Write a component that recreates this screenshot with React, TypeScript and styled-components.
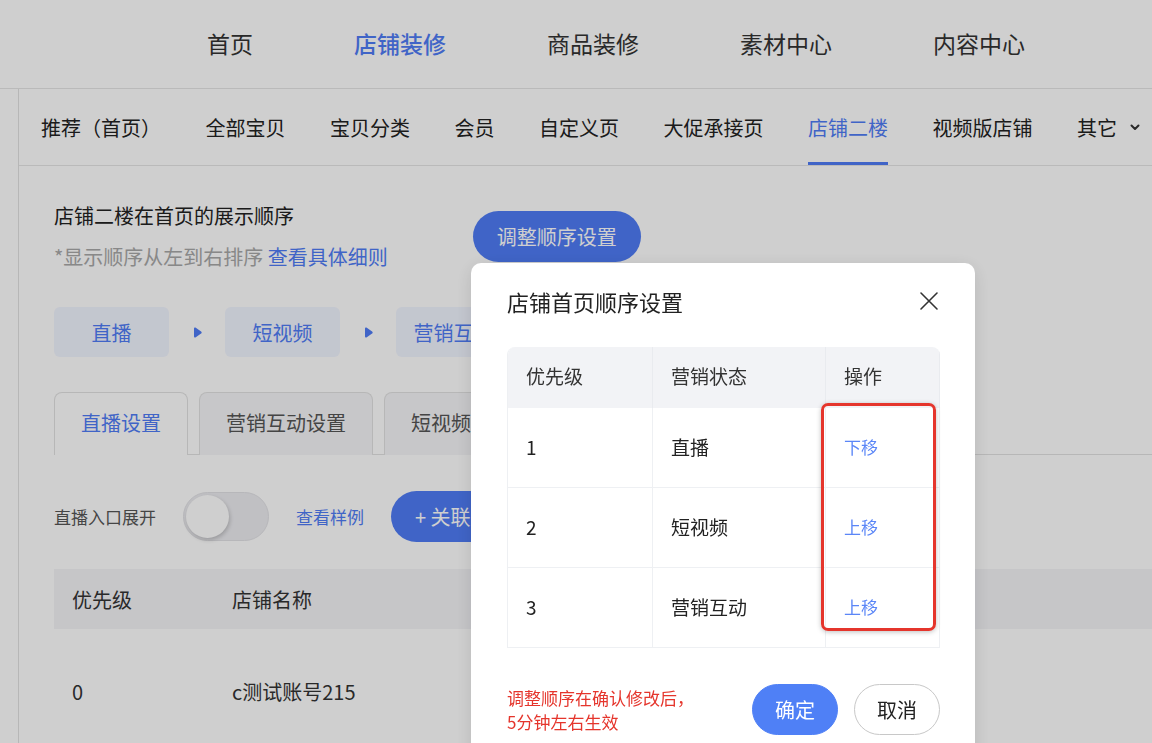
import styled, { createGlobalStyle } from "styled-components";

const blue = "#4f7cf5";

const GlobalStyle = createGlobalStyle`
    html, body { margin: 0; padding: 0; background: #fff; overflow: hidden; }
    body { font-family: "Noto Sans CJK SC", "Noto Sans", sans-serif; color: #333; }
    * { box-sizing: border-box; }
`;

/* ------------------ Page ------------------ */

const TopNav = styled.nav`
    height: 89px;
    display: flex;
    align-items: center;
    gap: 101px;
    padding: 0 0 3px 207px;
    border-bottom: 1px solid #e6e6e6;
    font-size: 23px;
`;

const TopItem = styled.span<{ $active?: boolean }>`
    color: ${(p) => (p.$active ? blue : "#333")};
    font-weight: ${(p) => (p.$active ? 500 : 400)};
`;

const Body = styled.div`
    display: flex;
    height: calc(100vh - 89px);
`;

const Sidebar = styled.aside`
    width: 19px;
    flex-shrink: 0;
    border-right: 1px solid #e2e2e2;
`;

const Main = styled.main`
    flex: 1;
    min-width: 0;
`;

const SubNav = styled.div`
    height: 77px;
    display: flex;
    gap: 44.5px;
    padding-left: 22px;
    border-bottom: 1px solid #e6e6e6;
`;

const SubItem = styled.div<{ $active?: boolean }>`
    position: relative;
    display: flex;
    align-items: center;
    gap: 12px;
    font-size: 20px;
    color: ${(p) => (p.$active ? blue : "#222")};

    &::after {
        content: "";
        display: ${(p) => (p.$active ? "block" : "none")};
        position: absolute;
        left: 0;
        right: 0;
        bottom: 0;
        height: 3px;
        background: ${blue};
    }
`;

const Content = styled.div`
    padding: 36px 0 0 35px;
`;

const SectionHead = styled.div`
    display: flex;
    align-items: center;
    gap: 85px;
`;

const TextBlock = styled.div`
    display: flex;
    flex-direction: column;
    gap: 13px;
    font-size: 20px;
    line-height: 28px;
`;

const Title = styled.div`
    color: #222;
`;

const Hint = styled.div`
    color: #a8a8a8;
`;

const Link = styled.span`
    color: ${blue};
`;

const PillButton = styled.button`
    height: 51px;
    padding: 0 24px;
    border: none;
    border-radius: 26px;
    background: ${blue};
    color: #fff;
    font-family: inherit;
    font-size: 20px;
    white-space: nowrap;
`;

const ChipRow = styled.div`
    display: flex;
    align-items: center;
    margin-top: 36px;
`;

const Chip = styled.div`
    width: 115px;
    height: 50px;
    border-radius: 6px;
    background: #f1f5ff;
    color: ${blue};
    font-size: 20px;
    display: flex;
    align-items: center;
    justify-content: center;
    flex-shrink: 0;
`;

const ChipArrow = styled.div`
    width: 56px;
    display: flex;
    justify-content: center;
`;

const TabRow = styled.div`
    display: flex;
    gap: 11px;
    margin-top: 35px;
    border-bottom: 1px solid #e2e2e2;
`;

const Tab = styled.div<{ $active?: boolean }>`
    height: 63px;
    padding: 0 26px 3px;
    display: flex;
    align-items: center;
    font-size: 20px;
    white-space: nowrap;
    border: 1px solid #e2e2e2;
    border-bottom: none;
    border-radius: 8px 8px 0 0;
    margin-bottom: -1px;
    background: ${(p) => (p.$active ? "#fff" : "#f5f5f8")};
    color: ${(p) => (p.$active ? blue : "#555")};
`;

const SwitchRow = styled.div`
    display: flex;
    align-items: center;
    gap: 27px;
    height: 51px;
    margin-top: 36px;
    font-size: 17px;
    color: #555;
`;

const SwitchTrack = styled.div`
    width: 86px;
    height: 49px;
    border-radius: 25px;
    background: #ededf1;
    border: 1px solid #e2e2e6;
    padding: 2px;
    display: flex;
    align-items: center;
`;

const SwitchKnob = styled.div`
    width: 43px;
    height: 43px;
    border-radius: 50%;
    background: #fff;
    box-shadow: 1px 2px 4px rgba(0, 0, 0, 0.2);
`;

const ListHead = styled.div`
    display: flex;
    align-items: center;
    height: 60px;
    margin-top: 27px;
    background: #f4f4f7;
    font-size: 20px;
    color: #333;
`;

const ListRow = styled.div`
    display: flex;
    align-items: center;
    height: 124px;
    font-size: 20px;
    color: #333;
`;

const ListCell = styled.div<{ $w?: number }>`
    width: ${(p) => (p.$w ? `${p.$w}px` : "auto")};
    padding-left: 18px;
`;

/* ------------------ Modal ------------------ */

const Mask = styled.div`
    position: fixed;
    inset: 0;
    background: rgba(0, 0, 0, 0.19);
`;

const Dialog = styled.div`
    position: absolute;
    left: 471px;
    top: 263px;
    width: 504px;
    height: 520px;
    background: #fff;
    border-radius: 10px;
    box-shadow: 0 4px 18px rgba(0, 0, 0, 0.12);
    padding: 24px 35px 0 36px;
`;

const DialogHead = styled.div`
    height: 28px;
    display: flex;
    align-items: center;
    justify-content: space-between;
`;

const DialogTitle = styled.div`
    font-size: 22px;
    color: #222;
`;

const CloseBtn = styled.div`
    display: flex;
    margin-right: 1px;
`;

const TableWrap = styled.div`
    position: relative;
    margin-top: 32px;
`;

const Grid = styled.div`
    display: grid;
    grid-template-columns: 145px 173px 1fr;
    grid-template-rows: 61px repeat(3, 80px);
    border-left: 1px solid #eef0f3;
    border-top-left-radius: 8px;
    border-top-right-radius: 8px;
    overflow: hidden;
`;

const HeadCell = styled.div<{ $pad: number }>`
    display: flex;
    align-items: center;
    padding: 0 0 4px ${(p) => p.$pad}px;
    background: #f2f3f6;
    border-right: 1px solid #e9ebef;
    font-size: 19px;
    color: #333;
`;

const Cell = styled.div<{ $pad: number }>`
    display: flex;
    align-items: center;
    padding: 0 0 3px ${(p) => p.$pad}px;
    border-right: 1px solid #eef0f3;
    border-bottom: 1px solid #eef0f3;
    font-size: 19px;
    color: #222;
`;

const MoveLink = styled.span`
    color: #5b86f7;
    font-size: 17px;
`;

const Highlight = styled.div`
    position: absolute;
    left: 314px;
    top: 56px;
    width: 115px;
    height: 228px;
    border: 3px solid #e5352c;
    border-radius: 7px;
    box-shadow: 0 1px 5px rgba(0, 0, 0, 0.25);
`;

const DialogFoot = styled.div`
    margin-top: 36px;
    display: flex;
    align-items: center;
    justify-content: space-between;
`;

const Note = styled.div`
    color: #e5352c;
    font-size: 17px;
    line-height: 24px;
`;

const FootButtons = styled.div`
    display: flex;
    gap: 16px;
`;

const FootButton = styled.button<{ $primary?: boolean }>`
    width: 86px;
    height: 51px;
    border-radius: 26px;
    font-family: inherit;
    font-size: 20px;
    border: 1px solid ${(p) => (p.$primary ? "#4f80f6" : "#c8c8c8")};
    background: ${(p) => (p.$primary ? "#4f80f6" : "#fff")};
    color: ${(p) => (p.$primary ? "#fff" : "#222")};
`;

/* ------------------ Data ------------------ */

const topItems = ["首页", "店铺装修", "商品装修", "素材中心", "内容中心"];
const subItems = ["推荐（首页）", "全部宝贝", "宝贝分类", "会员", "自定义页", "大促承接页", "店铺二楼", "视频版店铺"];
const chips = ["直播", "短视频", "营销互动"];
const tabs = ["直播设置", "营销互动设置", "短视频设置"];
const orderRows = [
    { level: "1", name: "直播", action: "下移" },
    { level: "2", name: "短视频", action: "上移" },
    { level: "3", name: "营销互动", action: "上移" },
];

export default function App() {
    return (
        <>
            <GlobalStyle />
            <TopNav>
                {topItems.map((t) => (
                    <TopItem key={t} $active={t === "店铺装修"}>
                        {t}
                    </TopItem>
                ))}
            </TopNav>
            <Body>
                <Sidebar />
                <Main>
                    <SubNav>
                        {subItems.map((t) => (
                            <SubItem key={t} $active={t === "店铺二楼"}>
                                {t}
                            </SubItem>
                        ))}
                        <SubItem>
                            其它
                            <svg width="12" height="12" viewBox="0 0 12 12">
                                <path d="M2.5 4.5 6 8l3.5-3.5" fill="none" stroke="#333" strokeWidth="2" strokeLinecap="round" strokeLinejoin="round" />
                            </svg>
                        </SubItem>
                    </SubNav>
                    <Content>
                        <SectionHead>
                            <TextBlock>
                                <Title>店铺二楼在首页的展示顺序</Title>
                                <Hint>
                                    *显示顺序从左到右排序 <Link>查看具体细则</Link>
                                </Hint>
                            </TextBlock>
                            <PillButton>调整顺序设置</PillButton>
                        </SectionHead>

                        <ChipRow>
                            {chips.map((c, i) => (
                                <>
                                    {i > 0 && (
                                        <ChipArrow key={`a${i}`}>
                                            <svg width="9" height="11" viewBox="0 0 9 11">
                                                <path d="M1 1.8C1 .6 1.9.2 2.8.8l5.3 3.6c.8.5.8 1.7 0 2.2L2.8 10.2C1.9 10.8 1 10.4 1 9.2z" fill={blue} />
                                            </svg>
                                        </ChipArrow>
                                    )}
                                    <Chip key={c}>{c}</Chip>
                                </>
                            ))}
                        </ChipRow>

                        <TabRow>
                            {tabs.map((t, i) => (
                                <Tab key={t} $active={i === 0}>
                                    {t}
                                </Tab>
                            ))}
                        </TabRow>

                        <SwitchRow>
                            直播入口展开
                            <SwitchTrack>
                                <SwitchKnob />
                            </SwitchTrack>
                            <Link>查看样例</Link>
                            <PillButton>+ 关联店铺</PillButton>
                        </SwitchRow>

                        <ListHead>
                            <ListCell $w={160}>优先级</ListCell>
                            <ListCell>店铺名称</ListCell>
                        </ListHead>
                        <ListRow>
                            <ListCell $w={160}>0</ListCell>
                            <ListCell>c测试账号215</ListCell>
                        </ListRow>
                    </Content>
                </Main>
            </Body>

            <Mask>
                <Dialog>
                    <DialogHead>
                        <DialogTitle>店铺首页顺序设置</DialogTitle>
                        <CloseBtn>
                            <svg width="20" height="20" viewBox="0 0 20 20">
                                <path d="M2 2l16 16M18 2 2 18" stroke="#333" strokeWidth="1.6" strokeLinecap="round" />
                            </svg>
                        </CloseBtn>
                    </DialogHead>
                    <TableWrap>
                        <Grid>
                            <HeadCell $pad={18}>优先级</HeadCell>
                            <HeadCell $pad={18}>营销状态</HeadCell>
                            <HeadCell $pad={18}>操作</HeadCell>
                            {orderRows.map((r) => (
                                <>
                                    <Cell key={`l${r.level}`} $pad={18}>{r.level}</Cell>
                                    <Cell key={`n${r.level}`} $pad={18}>{r.name}</Cell>
                                    <Cell key={`a${r.level}`} $pad={18}>
                                        <MoveLink>{r.action}</MoveLink>
                                    </Cell>
                                </>
                            ))}
                        </Grid>
                        <Highlight />
                    </TableWrap>
                    <DialogFoot>
                        <Note>
                            调整顺序在确认修改后，
                            <br />
                            5分钟左右生效
                        </Note>
                        <FootButtons>
                            <FootButton $primary>确定</FootButton>
                            <FootButton>取消</FootButton>
                        </FootButtons>
                    </DialogFoot>
                </Dialog>
            </Mask>
        </>
    );
}
